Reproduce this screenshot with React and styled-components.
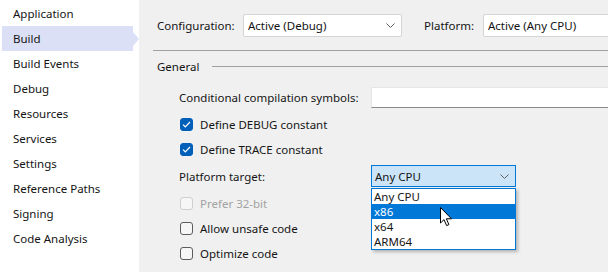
import React from 'react'
import styled, { createGlobalStyle } from 'styled-components'

const Global = createGlobalStyle`
  html, body { margin: 0; padding: 0; }
  body {
    width: 608px;
    height: 272px;
    overflow: hidden;
    font-family: "Noto Sans", "Open Sans", sans-serif;
    font-size: 11.5px;
    color: #141414;
    background: #f0f0f0;
  }
`

const pages = [
  'Application', 'Build', 'Build Events', 'Debug', 'Resources',
  'Services', 'Settings', 'Reference Paths', 'Signing', 'Code Analysis',
]

function Chevron() {
  return (
    <svg width="9" height="5" viewBox="0 0 9 5">
      <path d="M0.5 0.5 L4.5 4.5 L8.5 0.5" fill="none" stroke="#606060" strokeWidth="1" />
    </svg>
  )
}

function Check({ checked, disabled }) {
  return (
    <Box checked={checked} disabled={disabled}>
      {checked && (
        <svg width="9" height="7" viewBox="0 0 9 7">
          <path d="M1 3.6 L3.3 5.8 L8 1" fill="none" stroke="#fff" strokeWidth="1.2" />
        </svg>
      )}
    </Box>
  )
}

function Cursor() {
  return (
    <CursorWrap>
      <svg width="13" height="20" viewBox="0 0 13 20">
        <path d="M0.5 0.5 L0.5 16 L4 12.6 L6.6 18.6 L8.9 17.6 L6.4 11.8 L11.5 11.8 Z"
          fill="#fff" stroke="#000" strokeWidth="1" strokeLinejoin="round" />
      </svg>
    </CursorWrap>
  )
}

export default function App() {
  return (
    <>
      <Global />
      <Page>
        <Sidebar>
          {pages.map(p => (
            <NavItem key={p} active={p === 'Build'}>{p}</NavItem>
          ))}
        </Sidebar>
        <Main>
          <TopBar>
            <Label width="86px">Configuration:</Label>
            <Select width="159px">
              <span>Active (Debug)</span>
              <Chevron />
            </Select>
            <Label width="59px" gap="22px">Platform:</Label>
            <Select width="140px">
              <span>Active (Any CPU)</span>
            </Select>
          </TopBar>
          <Section>
            <SectionTitle>General</SectionTitle>
            <Rule />
          </Section>
          <Form>
            <Row height="24px">
              <FieldLabel>Conditional compilation symbols:</FieldLabel>
              <TextInput />
            </Row>
            <Checks>
              <CheckRow>
                <Check checked />
                <span>Define DEBUG constant</span>
              </CheckRow>
              <CheckRow>
                <Check checked />
                <span>Define TRACE constant</span>
              </CheckRow>
            </Checks>
            <Row height="28px">
              <FieldLabel>Platform target:</FieldLabel>
              <ComboWrap>
                <Combo>
                  <span>Any CPU</span>
                  <Chevron />
                </Combo>
                <List>
                  <Option>Any CPU</Option>
                  <Option selected>x86</Option>
                  <Option>x64</Option>
                  <Option>ARM64</Option>
                </List>
                <Cursor />
              </ComboWrap>
            </Row>
            <Checks top="1px">
              <CheckRow disabled>
                <Check disabled />
                <span>Prefer 32-bit</span>
              </CheckRow>
              <CheckRow>
                <Check />
                <span>Allow unsafe code</span>
              </CheckRow>
              <CheckRow>
                <Check />
                <span>Optimize code</span>
              </CheckRow>
            </Checks>
          </Form>
        </Main>
      </Page>
    </>
  )
}

const Page = styled.div`
  display: flex;
  width: 608px;
  height: 272px;
`

const Sidebar = styled.div`
  width: 139px;
  flex-shrink: 0;
  background: #fff;
  padding-top: 1px;
  box-sizing: border-box;
`

const NavItem = styled.div`
  position: relative;
  height: 25px;
  line-height: 25px;
  margin: 0 6px 0 2px;
  padding-left: 11px;
  white-space: nowrap;
  background: ${p => (p.active ? '#dce0f7' : 'transparent')};
  &::after {
    content: '';
    display: ${p => (p.active ? 'block' : 'none')};
    position: absolute;
    right: -6px;
    top: 6px;
    border-left: 6px solid #dce0f7;
    border-top: 7px solid transparent;
    border-bottom: 7px solid transparent;
  }
`

const Main = styled.div`
  flex: 1;
  padding-left: 14px;
  overflow: hidden;
`

const TopBar = styled.div`
  display: flex;
  align-items: center;
  height: 50px;
  padding-left: 4px;
  border-bottom: 1px solid #a0a0a0;
  white-space: nowrap;
`

const Label = styled.span`
  width: ${p => p.width};
  flex-shrink: 0;
  margin-left: ${p => p.gap || '0'};
`

const Select = styled.div`
  display: flex;
  align-items: center;
  justify-content: space-between;
  flex-shrink: 0;
  box-sizing: border-box;
  width: ${p => p.width};
  height: 23px;
  padding: 0 6px 0 4px;
  background: #fff;
  border: 1px solid #d4d4d4;
  border-radius: 2px;
`

const Section = styled.div`
  display: flex;
  align-items: center;
  height: 28px;
  padding-left: 4px;
  margin-top: 1px;
`

const SectionTitle = styled.span`
  margin-right: 13px;
`

const Rule = styled.div`
  flex: 1;
  height: 1px;
  background: #a0a0a0;
`

const Form = styled.div`
  padding-left: 26px;
  margin-top: 5px;
`

const Row = styled.div`
  display: flex;
  align-items: center;
  height: ${p => p.height};
`

const FieldLabel = styled.span`
  width: 192px;
  flex-shrink: 0;
  white-space: nowrap;
`

const TextInput = styled.div`
  flex: 1;
  height: 21px;
  box-sizing: border-box;
  background: #fff;
  border: 1px solid #e6e6e6;
  border-bottom: 1px solid #8a8a8a;
  border-right: none;
`

const Checks = styled.div`
  padding-top: ${p => p.top || '3px'};
`

const CheckRow = styled.div`
  display: flex;
  align-items: center;
  gap: 7px;
  height: 25px;
  padding-left: 1px;
  color: ${p => (p.disabled ? '#a2a2a2' : 'inherit')};
`

const Box = styled.div`
  display: flex;
  align-items: center;
  justify-content: center;
  width: 13px;
  height: 13px;
  box-sizing: border-box;
  border-radius: 3px;
  background: ${p => (p.checked ? '#005fb8' : '#f6f6f6')};
  border: 1px solid ${p => (p.checked ? '#005fb8' : p.disabled ? '#cfcfcf' : '#5c5c5c')};
`

const ComboWrap = styled.div`
  position: relative;
  width: 145px;
`

const Combo = styled.div`
  display: flex;
  align-items: center;
  justify-content: space-between;
  box-sizing: border-box;
  height: 22px;
  padding: 0 6px 0 3px;
  background: #cce4f7;
  border: 1px solid #0078d7;
`

const List = styled.div`
  position: absolute;
  top: 23px;
  left: 0;
  width: 145px;
  box-sizing: border-box;
  background: #fff;
  border: 1px solid #0078d7;
  box-shadow: 2px 2px 3px rgba(0, 0, 0, 0.25);
  z-index: 2;
`

const Option = styled.div`
  height: 15px;
  line-height: 15px;
  padding-left: 2px;
  background: ${p => (p.selected ? '#0078d7' : 'transparent')};
  color: ${p => (p.selected ? '#fff' : 'inherit')};
`

const CursorWrap = styled.div`
  position: absolute;
  left: 69px;
  top: 42px;
  z-index: 3;
  line-height: 0;
`
